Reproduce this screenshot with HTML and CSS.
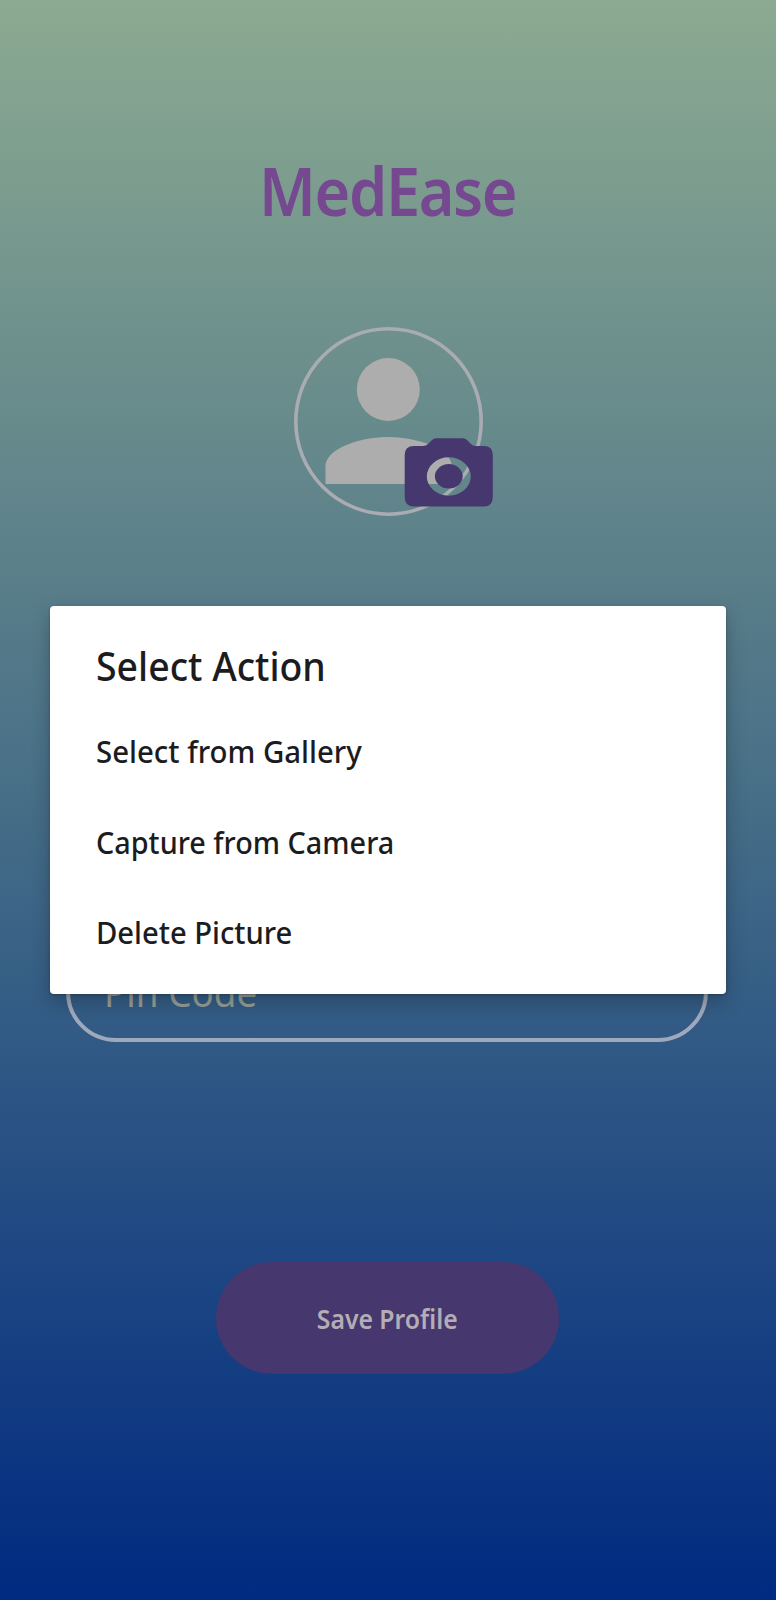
FILE: index.html
```html
<!DOCTYPE html>
<html lang="en">
<head>
<meta charset="utf-8">
<title>MedEase</title>
<link rel="stylesheet" href="styles.css">
</head>
<body>
<main class="screen">
  <h1 class="brand">MedEase</h1>
  <svg class="avatar" viewBox="0 0 204 192" width="204" height="192">
    <circle cx="96.5" cy="96.5" r="92.700" fill="none" stroke="#a9acb2" stroke-width="3.6"/>
    <circle cx="96.3" cy="64.5" r="31.500" fill="#adadad"/>
    <path d="M33.500 159V139C37 122 70 112 96.500 112S160 123 160 142V159Z" fill="#adadad"/>
    <path fill="#46376e" fill-rule="evenodd" d="M144.500 113.200H170.500Q173.500 113.200 175.500 115.500L179 119Q181 121 183 121H192Q200.800 121 200.800 130V172Q200.800 181.500 192 181.500H122Q112.700 181.500 112.700 172V130Q112.700 121 122 121H131Q134 121 136 119L139.500 115.500Q141.500 113.200 144.500 113.200ZM156.800 132.300A22 19.200 0 1 0 156.800 170.700A22 19.200 0 1 0 156.800 132.300Z"/>
    <ellipse cx="156.800" cy="151.300" rx="13.900" ry="12.200" fill="#46376e"/>
  </svg>
  <div class="field"><span class="hint">Pin Code</span></div>
  <button class="save"><span class="save-label">Save Profile</span></button>
  <section class="dialog">
    <h2 class="dialog-title">Select Action</h2>
    <div class="option gallery">Select from Gallery</div>
    <div class="option capture">Capture from Camera</div>
    <div class="option delete">Delete Picture</div>
  </section>
</main>
</body>
</html>
```
FILE: styles.css
```css
* { box-sizing: border-box; }
body { margin: 0; font-family: "Noto Sans", sans-serif; }
.screen {
  position: relative;
  display: flex;
  flex-direction: column;
  align-items: center;
  width: 776px;
  height: 1600px;
  overflow: hidden;
  background: linear-gradient(#8caa91, #466e87 50%, #002a80);
}
.brand {
  margin: 145px 0 0;
  font-size: 66px;
  line-height: 90px;
  font-weight: 600;
  letter-spacing: -1.5px;
  color: #754890;
  transform: scaleX(.927);
}
.avatar { flex: none; margin: 90px 0 0 12px; }
.field {
  display: flex;
  align-items: center;
  flex: none;
  width: 642px;
  height: 113px;
  margin: 412px 2px 0 0;
  padding: 13px 0 0 34px;
  border: 4px solid #a0a9bb;
  border-radius: 50px;
}
.hint {
  font-size: 38px;
  line-height: 52px;
  color: #969f98;
  transform: scaleX(.97);
  transform-origin: left;
}
.save {
  flex: none;
  width: 343px;
  height: 112px;
  margin: 220px 0 0 -2px;
  padding: 2px 0 0;
  border: 0;
  border-radius: 56px;
  background: #46376e;
  color: #b3adb5;
  font: 600 27.5px/38px "Noto Sans", sans-serif;
}
.save-label { display: inline-block; transform: scaleX(.9); }
.dialog {
  position: absolute;
  left: 50px;
  top: 606px;
  width: 676px;
  height: 387.5px;
  padding: 33px 46px 0;
  border-radius: 4px;
  background: #fff;
  color: #1c1c1e;
  box-shadow: 0 8px 20px rgba(0, 0, 0, .24), 0 1px 3px rgba(0, 0, 0, .22);
}
.dialog-title {
  margin: 0 0 14px;
  font-size: 39px;
  line-height: 54px;
  font-weight: 500;
  transform: scaleX(.96);
  transform-origin: left;
}
.option {
  height: 90.5px;
  font-size: 31px;
  line-height: 89px;
  font-weight: 500;
  transform-origin: left;
}
.gallery { transform: scaleX(.948); }
.capture { transform: scaleX(.929); }
.delete { transform: scaleX(.942); }
```
